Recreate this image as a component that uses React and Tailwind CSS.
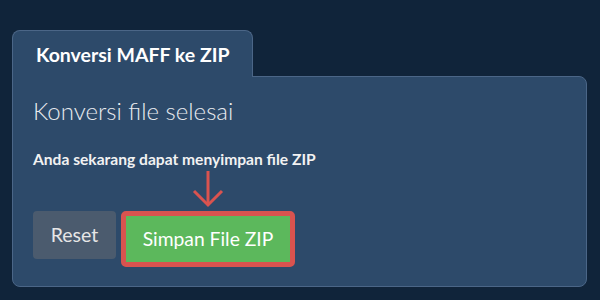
import React from "react";

export default function App() {
  return (
    <div
      className="w-[600px] h-[300px] bg-[#10243a] pt-[30px] pl-[12px] pr-[13px] overflow-hidden"
      style={{ fontFamily: "Lato, 'Noto Sans', sans-serif" }}
    >
      <div className="flex">
        <div className="relative z-10 -mb-px h-[47px] rounded-t-[8px] border border-b-0 border-[#4b6687] bg-[#2d4a6a] pl-[23px] pr-[22px] pt-[12px]">
          <span className="block text-[19.5px] leading-[24px] font-bold text-white whitespace-nowrap">
            Konversi MAFF ke ZIP
          </span>
        </div>
      </div>
      <div className="h-[211px] rounded-b-[8px] rounded-tr-[8px] border border-[#4b6687] bg-[#2d4a6a] pl-[20px] pt-[18px]">
        <div className="text-[24px] leading-[32px] font-light text-[#e8ebef]">
          Konversi file selesai
        </div>
        <div className="mt-[22px] text-[15.6px] leading-[20px] font-bold text-[#f2f2f2]">
          Anda sekarang dapat menyimpan file ZIP
        </div>
        <div className="mt-[42px] flex items-start gap-[5px]">
          <button className="w-[83px] h-[48px] rounded-[4px] bg-[#4b5b6e] text-[19.5px] text-[#e6e6e6]">
            Reset
          </button>
          <div className="relative">
            <svg
              className="absolute left-1/2 -translate-x-1/2 bottom-full mb-[2px]"
              width="34"
              height="38"
              viewBox="0 0 34 38"
            >
              <line x1="17" y1="0" x2="17" y2="34" stroke="#d9534f" strokeWidth="3" />
              <polyline points="3,20 17,34 31,20" fill="none" stroke="#d9534f" strokeWidth="3" />
            </svg>
            <button className="w-[174px] h-[56px] rounded-[5px] border-[5px] border-[#d9534f] bg-[#5cb85c] text-[19.3px] text-white">
              Simpan File ZIP
            </button>
          </div>
        </div>
      </div>
    </div>
  );
}
